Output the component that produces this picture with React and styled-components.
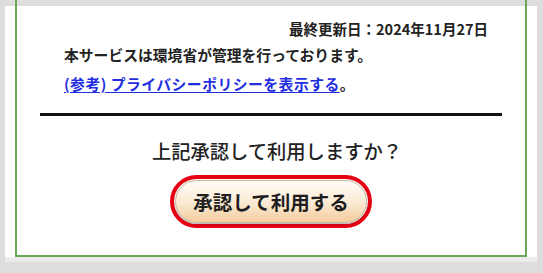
import React from "react";
import styled, { createGlobalStyle } from "styled-components";

const GlobalStyle = createGlobalStyle`
  html, body {
    margin: 0;
    padding: 0;
    background: #dcdddc;
  }
  body {
    font-family: "Noto Sans CJK JP", "Noto Sans", sans-serif;
    color: #222;
  }
`;

const Page = styled.div`
  width: 543px;
  height: 273px;
  padding: 0 6px 0 5px;
  box-sizing: border-box;
  overflow: hidden;
`;

const Card = styled.div`
  background: linear-gradient(
    to bottom,
    #dcdddc 0 6px,
    #ffffff 6px calc(100% - 5px),
    #ececec calc(100% - 5px)
  );
  padding: 0 10px 5px 10px;
`;

const Frame = styled.div`
  height: 257px;
  box-sizing: border-box;
  border: 2px solid #6ba85a;
  border-top: none;
  padding: 19px 23px 0;
  display: flex;
  flex-direction: column;
`;

const Updated = styled.div`
  text-align: right;
  padding-right: 14px;
  font-size: 14.5px;
  font-weight: 700;
  line-height: 20px;
`;

const Note = styled.p`
  margin: ${(p) => (p.$first ? "2px 0 0" : "0")};
  padding-left: 24px;
  font-size: 14.8px;
  font-weight: 700;
  line-height: ${(p) => (p.$first ? "28px" : "30px")};
`;

const PolicyLink = styled.a`
  color: #1f2ee0;
  font-weight: 700;
  letter-spacing: 0.5px;
  text-decoration: underline;
  text-underline-offset: 2px;
`;

const Rule = styled.hr`
  margin: 14px 0 0;
  height: 3px;
  border: none;
  background: #111;
`;

const Question = styled.div`
  margin-top: 22px;
  text-align: center;
  padding-left: 12px;
  font-size: 19.3px;
  font-weight: 500;
  line-height: 26px;
`;

const Actions = styled.div`
  margin-top: 11px;
  display: flex;
  justify-content: center;
`;

const Ring = styled.div`
  border: 4px solid #e50012;
  border-radius: 30px;
  padding: 1px;
  background: #fff;
`;

const ApproveButton = styled.button`
  height: 43px;
  padding: 0 17px;
  border: 1px solid #c9b79c;
  border-radius: 22px;
  background: linear-gradient(to bottom, #fffdf9 0%, #fbe9d2 55%, #f3cc9c 100%);
  box-shadow: 0 1px 2px rgba(0, 0, 0, 0.35);
  font-family: "Noto Sans CJK JP", "Noto Sans", sans-serif;
  font-size: 19.5px;
  font-weight: 700;
  color: #1d1d1d;
  line-height: 1;
  cursor: pointer;
`;

export default function App() {
  return (
    <Page>
      <GlobalStyle />
      <Card>
        <Frame>
          <Updated>最終更新日：2024年11月27日</Updated>
          <Note $first>本サービスは環境省が管理を行っております。</Note>
          <Note>
            <PolicyLink href="#">(参考) プライバシーポリシーを表示する</PolicyLink>。
          </Note>
          <Rule />
          <Question>上記承認して利用しますか？</Question>
          <Actions>
            <Ring>
              <ApproveButton>承認して利用する</ApproveButton>
            </Ring>
          </Actions>
        </Frame>
      </Card>
    </Page>
  );
}
